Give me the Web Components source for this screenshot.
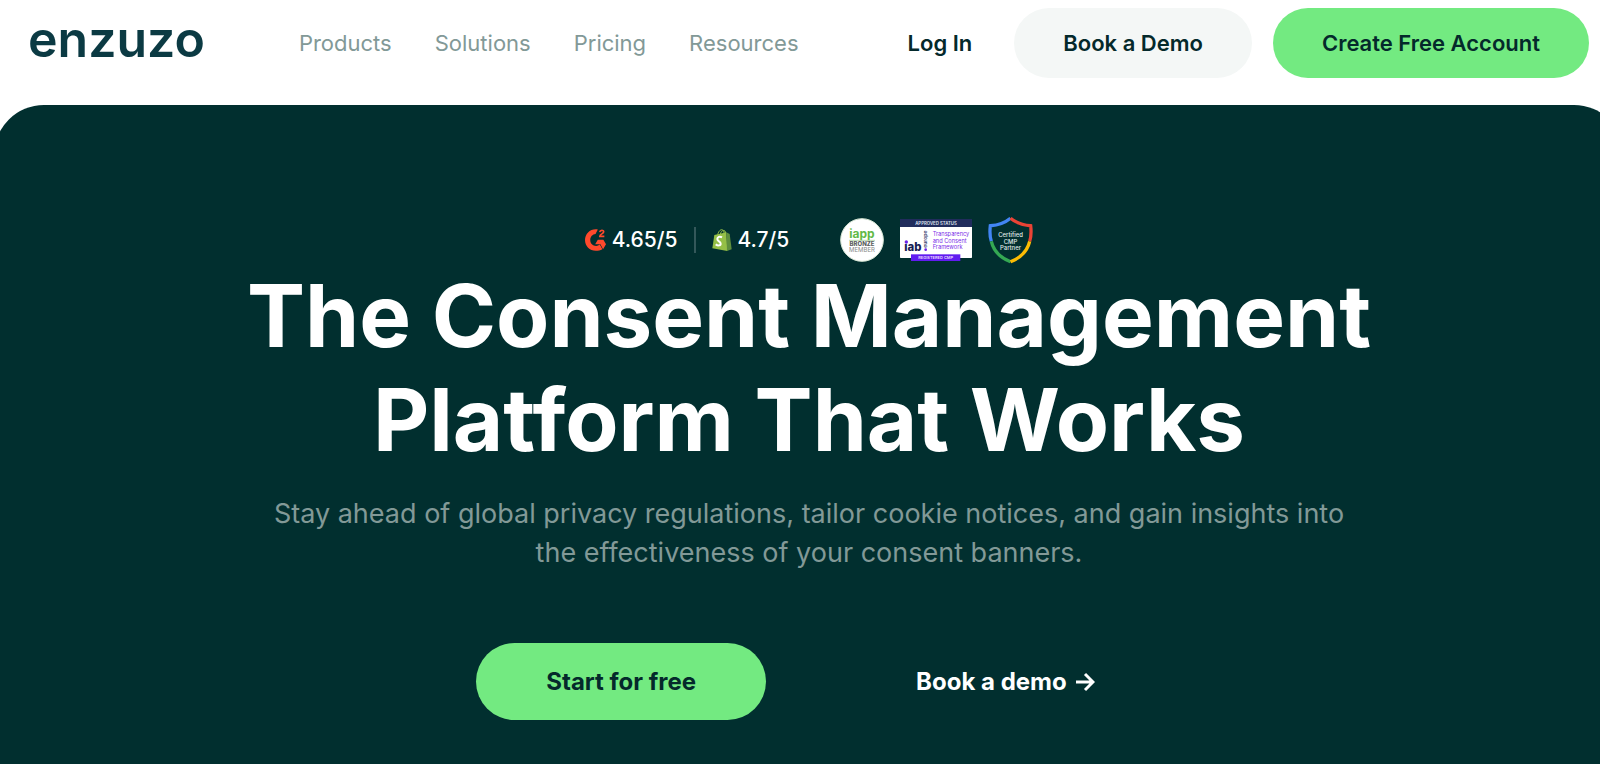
<!DOCTYPE html>
<html lang="en">
<head>
<meta charset="utf-8">
<meta name="viewport" content="width=device-width, initial-scale=1">
<title>Enzuzo</title>
<style>
  html {
    height: 100%;
    overflow-x: hidden;
  }

  body {
    margin: 0;
    min-height: 100%;
    display: flex;
    flex-direction: column;
    overflow-x: hidden;
    background: #fff;
    color: #04292b;
    font-family: Inter, "Liberation Sans", sans-serif;
    --green: #73ea81;
    --dark: #012f2f;
    --muted: #829997;
  }
</style>
</head>
<body>
  <ez-header>
    <ez-nav slot="nav">
      <a href="#products">Products</a>
      <a href="#solutions">Solutions</a>
      <a href="#pricing">Pricing</a>
      <a href="#resources">Resources</a>
    </ez-nav>
    <ez-button slot="actions" variant="plain" href="#login">Log In</ez-button>
    <ez-button slot="actions" variant="light" href="#demo">Book a Demo</ez-button>
    <ez-button slot="actions" variant="green" href="#signup">Create Free Account</ez-button>
  </ez-header>

  <ez-hero>
    <ez-rating slot="proof" icon="g2">4.65/5</ez-rating>
    <ez-rating slot="proof" icon="shopify">4.7/5</ez-rating>
    <ez-badges slot="badges"></ez-badges>
    <span slot="title">The Consent Management Platform That Works</span>
    <span slot="text">Stay ahead of global privacy regulations, tailor cookie notices, and gain insights into the effectiveness of your consent banners.</span>
    <ez-button slot="cta" variant="green" size="large" href="#start">Start for free</ez-button>
    <ez-button slot="cta" variant="ghost" size="large" arrow href="#book">Book a demo</ez-button>
  </ez-hero>

<script>
(function () {
  class EzHeader extends HTMLElement {
    constructor() {
      super();
      this.attachShadow({ mode: "open" });
      this.shadowRoot.innerHTML = `
        <style>
        :host{
            display:block;
        }

        header{
            display:flex;
            align-items:center;
            padding:8px 11px 27px 28px;
        }

        .logo{
            color:#0b3a43;
            font-size:50px;
            line-height:56px;
            font-weight:600;
            text-decoration:none;
            padding-bottom:8px;
        }

        .nav{
            margin-left:94px;
        }

        .actions{
            display:flex;
            align-items:center;
            margin-left:auto;
            gap:21px;
        }
        </style>

        <header>
            <a class="logo" href="#home">enzuzo</a>
            <div class="nav"><slot name="nav"></slot></div>
            <div class="actions"><slot name="actions"></slot></div>
        </header>
        `;
    }
  }

  class EzNav extends HTMLElement {
    constructor() {
      super();
      this.attachShadow({ mode: "open" });
      this.shadowRoot.innerHTML = `
        <style>
        :host{
            display:block;
        }

        nav{
            display:flex;
            gap:43px;
        }

        ::slotted(a){
            color:var(--muted);
            font-size:22px;
            line-height:28px;
            text-decoration:none;
        }
        </style>

        <nav><slot></slot></nav>
        `;
    }
  }

  class EzButton extends HTMLElement {
    constructor() {
      super();
      this.attachShadow({ mode: "open" });
      this.shadowRoot.innerHTML = `
        <style>
        :host{
            display:block;
        }

        a{
            display:flex;
            align-items:center;
            gap:8px;
            padding:21px 49px;
            border-radius:40px;
            color:#04292b;
            font-size:22px;
            line-height:28px;
            font-weight:600;
            text-decoration:none;
            white-space:nowrap;
        }

        svg{
            display:none;
            width:20px;
            height:20px;
        }

        :host([variant="plain"]) a{
            padding:21px;
        }

        :host([variant="light"]) a{
            background:#f4f7f6;
        }

        :host([variant="green"]) a{
            background:var(--green);
        }

        :host([size="large"]) a{
            padding:24px 70px;
            font-size:24px;
            line-height:29px;
            font-weight:700;
        }

        :host([variant="ghost"]) a{
            padding:24px 47px;
            color:#fff;
        }

        :host([arrow]) svg{
            display:block;
        }
        </style>

        <a>
            <slot></slot>
            <svg viewBox="0 0 20 20" fill="none" stroke="currentColor" stroke-width="3" aria-hidden="true">
                <path d="M1 10H18M10 2L18 10L10 18"/>
            </svg>
        </a>
        `;
    }

    connectedCallback() {
      this.shadowRoot.querySelector("a").href = this.getAttribute("href") || "#";
    }
  }

  const ICONS = {
    g2: `
      <svg viewBox="0 0 64 66" width="21" height="22" aria-hidden="true">
        <path fill="#ff492c" d="M33 0C35 0 37 0 39 1L32 15C23 16 16 23 16 33C16 44 24 51 34 51C38 51 42 50 45 47L53 61C47 65 40 66 33 66C14 66 0 51 0 33C0 15 14 0 33 0Z"/>
        <path fill="#ff492c" d="M39 32H56L64 46L55 61L47 46H31Z"/>
        <path fill="none" stroke="#ff492c" stroke-width="5" d="M45 9C46 2 57 2 57 8C57 14 45 15 45 22H59"/>
      </svg>`,
    shopify: `
      <svg viewBox="0 0 58 66" width="20" height="22" aria-hidden="true">
        <path fill="none" stroke="#95bf47" stroke-width="3" d="M16 17C19 5 26 0 31 3C36 6 35 11 35 15M24 15C27 5 33 2 38 6L40 14"/>
        <path fill="#95bf47" d="M6 18L42 10L45 66L0 58Z"/>
        <path fill="#5e8e3e" d="M42 10L52 15L58 61L44 66Z"/>
        <path fill="none" stroke="#fff" stroke-width="6" d="M29 25C22 21 15 24 15 30C15 37 25 37 25 44C25 51 16 50 10 46"/>
      </svg>`,
  };

  class EzRating extends HTMLElement {
    constructor() {
      super();
      this.attachShadow({ mode: "open" });
    }

    connectedCallback() {
      this.shadowRoot.innerHTML = `
        <style>
        :host{
            display:flex;
            align-items:center;
            gap:6px;
            color:#fff;
            font-size:21px;
            line-height:26px;
            font-weight:500;
        }

        :host(:not(:first-child)){
            border-left:2px solid #34585a;
            padding-left:16px;
        }
        </style>

        ${ICONS[this.getAttribute("icon")] || ""}
        <slot></slot>
      `;
    }
  }

  class EzBadges extends HTMLElement {
    constructor() {
      super();
      this.attachShadow({ mode: "open" });
      this.shadowRoot.innerHTML = `
        <style>
        :host{
            display:flex;
            align-items:center;
            gap:16px;
        }

        svg{
            display:block;
            font-family:Inter,sans-serif;
        }
        </style>

        <svg viewBox="0 0 132 132" width="44" height="44">
            <circle cx="66" cy="66" r="64" fill="#fff" stroke="#d7e6d4" stroke-width="3"/>
            <text x="66" y="59" font-size="36" font-weight="700" fill="#62b946" text-anchor="middle">iapp</text>
            <path stroke="#9bc58b" stroke-width="2" d="M27 67H105"/>
            <text x="66" y="84" font-size="18" font-weight="800" fill="#5c5f5d" text-anchor="middle">BRONZE</text>
            <text x="66" y="101" font-size="18" font-weight="400" fill="#858886" text-anchor="middle">MEMBER</text>
        </svg>

        <svg viewBox="0 0 216 126" width="72" height="42">
            <rect width="216" height="117" rx="2" fill="#fff"/>
            <rect width="216" height="24" fill="#202c5c"/>
            <text x="108" y="18" font-size="13" font-weight="600" fill="#dfe2ef" text-anchor="middle">APPROVED STATUS</text>
            <text x="13" y="95" font-size="34" font-weight="800" fill="#171c54">iab</text>
            <circle cx="19" cy="69" r="5" fill="#6a22e8"/>
            <text transform="translate(81 86) rotate(-90)" font-size="15" font-weight="600" fill="#38406d">europe</text>
            <circle cx="77" cy="92" r="4" fill="#6a22e8"/>
            <g font-size="17" fill="#7b30e8">
                <text x="98" y="51">Transparency</text>
                <text x="98" y="71">and Consent</text>
                <text x="98" y="90">Framework</text>
            </g>
            <rect x="33" y="106" width="148" height="20" fill="#611cf0"/>
            <text x="107" y="121" font-size="12" font-weight="600" fill="#e8dcff" text-anchor="middle">REGISTERED CMP</text>
        </svg>

        <svg viewBox="0 0 136 144" width="45" height="48">
            <g fill="none" stroke-width="10">
                <path stroke="#4285f4" d="M68 6C51 20 31 27 7 29C5 47 5 61 10 76"/>
                <path stroke="#ea4335" d="M68 6C85 20 105 27 129 29C131 47 131 61 126 76"/>
                <path stroke="#34a853" d="M10 76C17 105 38 126 68 138"/>
                <path stroke="#fbbc04" d="M126 76C119 105 98 126 68 138"/>
            </g>
            <g font-size="18" font-weight="500" fill="#e2eceb" text-anchor="middle">
                <text x="68" y="64">Certified</text>
                <text x="68" y="83">CMP</text>
                <text x="68" y="103">Partner</text>
            </g>
        </svg>
        `;
    }
  }

  class EzHero extends HTMLElement {
    constructor() {
      super();
      this.attachShadow({ mode: "open" });
      this.shadowRoot.innerHTML = `
        <style>
        :host{
            display:flex;
            flex:1;
        }

        /* the panel runs past both window edges, so its corners are cut */
        section{
            box-sizing:border-box;
            flex:1;
            margin:0 -24px 0 -6px;
            padding:111px 24px 44px;
            border-radius:50px 50px 0 0;
            background:var(--dark);
            text-align:center;
            display:flex;
            flex-direction:column;
            align-items:center;
        }

        .proof, .ratings, .cta{
            display:flex;
            align-items:center;
            justify-content:center;
        }

        .proof{
            gap:51px;
        }

        .ratings{
            gap:16px;
        }

        h1{
            margin:0;
            max-width:1200px;
            color:#fff;
            font-size:87px;
            line-height:104px;
            font-weight:700;
        }

        p{
            margin:22px 0 0;
            max-width:1100px;
            color:var(--muted);
            font-size:27px;
            line-height:39px;
        }

        .cta{
            margin-top:71px;
            gap:103px;
        }
        </style>

        <section>
            <div class="proof">
                <div class="ratings"><slot name="proof"></slot></div>
                <slot name="badges"></slot>
            </div>
            <h1><slot name="title"></slot></h1>
            <p><slot name="text"></slot></p>
            <div class="cta"><slot name="cta"></slot></div>
        </section>
        `;
    }
  }

  customElements.define("ez-header", EzHeader);
  customElements.define("ez-nav", EzNav);
  customElements.define("ez-button", EzButton);
  customElements.define("ez-rating", EzRating);
  customElements.define("ez-badges", EzBadges);
  customElements.define("ez-hero", EzHero);
})();
</script>
</body>
</html>
